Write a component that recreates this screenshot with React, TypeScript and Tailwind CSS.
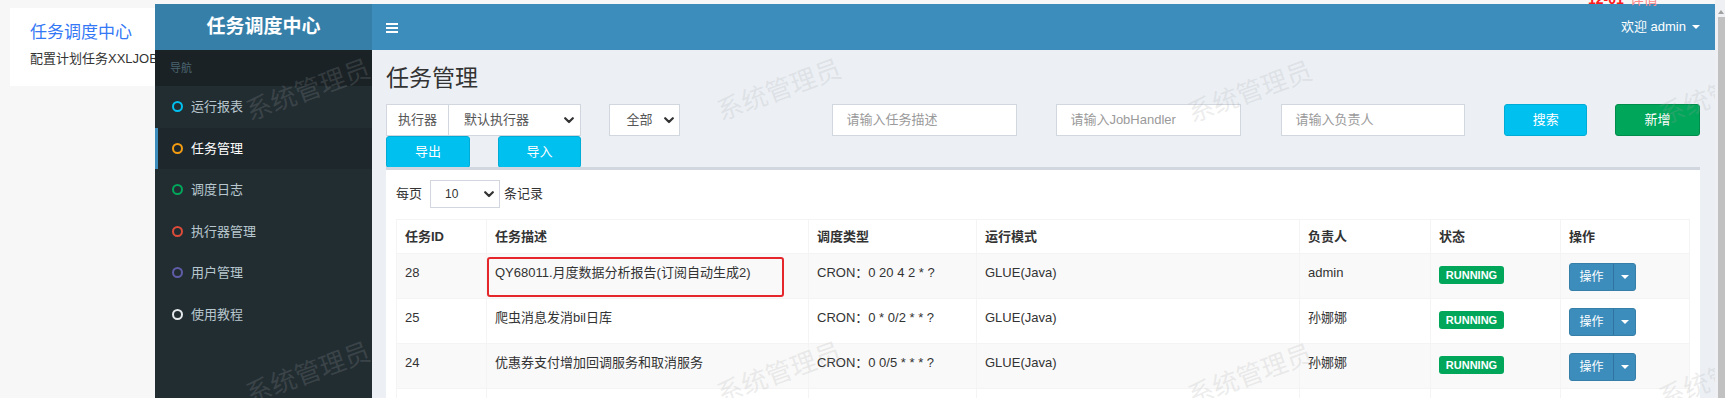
import React from "react";

const FONT = "font-['Liberation_Sans','Noto_Sans_CJK_SC',sans-serif]";

function Chevron({ className = "" }: { className?: string }) {
  return (
    <svg width="10" height="7" viewBox="0 0 10 7" className={className}>
      <polyline points="1.2,1.2 5,5 8.8,1.2" fill="none" stroke="#333" strokeWidth="2.2" strokeLinecap="round" strokeLinejoin="round" />
    </svg>
  );
}

function Caret({ color = "border-t-white" }: { color?: string }) {
  return <span className={`inline-block h-0 w-0 border-x-[4px] border-t-[4px] border-x-transparent ${color}`} />;
}

const menu = [
  { label: "运行报表", ring: "border-[#00c0ef]" },
  { label: "任务管理", ring: "border-[#f39c12]", active: true },
  { label: "调度日志", ring: "border-[#00a65a]" },
  { label: "执行器管理", ring: "border-[#dd4b39]" },
  { label: "用户管理", ring: "border-[#605ca8]" },
  { label: "使用教程", ring: "border-[#e6e9ec]" },
];

const jobs = [
  { id: "28", desc: "QY68011.月度数据分析报告(订阅自动生成2)", cron: "CRON：0 20 4 2 * ?", mode: "GLUE(Java)", owner: "admin", marked: true, bg: "bg-[#f9f9f9]" },
  { id: "25", desc: "爬虫消息发消bil日库", cron: "CRON：0 * 0/2 * * ?", mode: "GLUE(Java)", owner: "孙娜娜", bg: "bg-white" },
  { id: "24", desc: "优惠券支付增加回调服务和取消服务", cron: "CRON：0 0/5 * * * ?", mode: "GLUE(Java)", owner: "孙娜娜", bg: "bg-[#f9f9f9]" },
  { id: "", desc: "", cron: "", mode: "", owner: "", bg: "bg-white" },
];

const COLS = "grid grid-cols-[90px_322px_168px_323px_131px_130px_1fr]";

// watermark centres, relative to the admin window
const marks = [
  { x: 153, y: 86 },
  { x: 624, y: 86 },
  { x: 1095, y: 88 },
  { x: 1566, y: 90 },
  { x: 153, y: 369 },
  { x: 624, y: 369 },
  { x: 1095, y: 371 },
  { x: 1566, y: 373 },
];

function OpButton() {
  return (
    <div className="flex h-[28px] w-[67px] overflow-hidden rounded-[3px] border border-[#367fa9] bg-[#3c8dbc] text-[12px] text-white">
      <span className="flex w-[43px] items-center justify-center">操作</span>
      <span className="flex flex-1 items-center justify-center border-l border-[#2f73a0]">
        <Caret />
      </span>
    </div>
  );
}

function Badge() {
  return (
    <span className="mt-[2px] inline-flex h-[18px] w-[65px] items-center justify-center rounded-[3px] bg-[#00a65a] text-[11px] font-bold leading-none text-white">
      RUNNING
    </span>
  );
}

export default function App() {
  return (
    <div className={`relative h-[398px] w-[1725px] overflow-hidden bg-[#f7f7f7] ${FONT}`}>
      {/* underlying page */}
      <div className="flex h-full">
        <div className="flex-1">
          <div className="ml-[10px] mt-[8px] h-[78px] w-[420px] bg-white pl-[20px] pt-[14px]">
            <div className="text-[17px] leading-[22px] text-[#3478f6]">任务调度中心</div>
            <div className="mt-[6px] text-[13px] leading-[18px] text-[#333]">配置计划任务XXLJOB</div>
          </div>
        </div>
        {/* page scrollbar */}
        <div className="flex w-[10px] flex-col bg-[#eef0f3]">
          <div className="flex h-[17px] items-end justify-end pb-[3px] pr-[1px]">
            <span className="inline-block h-0 w-0 border-x-[3px] border-b-[4px] border-x-transparent border-b-[#a0a0a0]" />
          </div>
          <div className="ml-[3px] flex-1 bg-[#c1c1c1]" />
        </div>
      </div>

      {/* admin window */}
      <div className="absolute bottom-0 left-[155px] top-[4px] flex w-[1560px] overflow-hidden">
        {/* sidebar */}
        <aside className="flex w-[217px] shrink-0 flex-col bg-[#222d32]">
          <div className="flex h-[46px] items-center justify-center bg-[#367fa9] text-[19px] font-bold text-white">
            任务调度中心
          </div>
          <div className="flex h-[36px] items-center bg-[#1a2226] pl-[15px] text-[11px] text-[#4b646f]">导航</div>
          {menu.map((m) => (
            <div
              key={m.label}
              className={`flex h-[41.5px] items-center gap-2 border-l-[3px] pl-[14px] text-[13px] ${
                m.active ? "border-[#3c8dbc] bg-[#1e282c] text-white" : "border-transparent text-[#b8c7ce]"
              }`}
            >
              <span className={`h-[11px] w-[11px] rounded-full border-2 ${m.ring}`} />
              <span>{m.label}</span>
            </div>
          ))}
        </aside>

        {/* main column */}
        <div className="flex min-w-0 flex-1 flex-col bg-[#ecf0f5]">
          <header className="flex h-[46px] shrink-0 items-center justify-between bg-[#3c8dbc] pl-[14px] pr-[15px] text-white">
            <div className="flex w-[12px] flex-col gap-[2px] pt-[1px]">
              <span className="h-[2px] bg-white" />
              <span className="h-[2px] bg-white" />
              <span className="h-[2px] bg-white" />
            </div>
            <div className="flex items-center gap-[6px] text-[13px]">
              <span>欢迎 admin</span>
              <Caret />
            </div>
          </header>

          <div className="flex flex-1 flex-col pl-[14px] pr-[15px]">
            <h1 className="mt-[15px] text-[23px] leading-[26px] text-[#333]">任务管理</h1>

            {/* filters */}
            <div className="mt-[13px] flex h-[32px] text-[13px] text-[#555]">
              <div className="flex w-[195px]">
                <span className="flex w-[63px] items-center justify-center border border-[#d2d6de] bg-white">执行器</span>
                <div className="flex flex-1 items-center justify-between border border-l-0 border-[#d2d6de] bg-white pl-[15px] pr-[6px]">
                  <span>默认执行器</span>
                  <Chevron />
                </div>
              </div>
              <div className="ml-[28px] flex w-[72px] items-center justify-between border border-[#d2d6de] bg-white pl-[17px] pr-[5px]">
                <span>全部</span>
                <Chevron />
              </div>
              <input readOnly placeholder="请输入任务描述" className="ml-[152px] w-[185px] border border-[#d2d6de] bg-white pl-[13px] outline-none placeholder:text-[#9a9a9a]" />
              <input readOnly placeholder="请输入JobHandler" className="ml-[39px] w-[185px] border border-[#d2d6de] bg-white pl-[13px] outline-none placeholder:text-[#9a9a9a]" />
              <input readOnly placeholder="请输入负责人" className="ml-[40px] w-[184px] border border-[#d2d6de] bg-white pl-[13px] outline-none placeholder:text-[#9a9a9a]" />
              <button className="ml-[39px] w-[83px] rounded-[3px] border border-[#00acd6] bg-[#00c0ef] text-white">搜索</button>
              <button className="ml-[28px] w-[85px] rounded-[3px] border border-[#008d4c] bg-[#00a65a] text-white">新增</button>
            </div>
            <div className="flex h-[32px] text-[13px] text-white">
              <button className="w-[84px] rounded-[3px] border border-[#00acd6] bg-[#00c0ef]">导出</button>
              <button className="ml-[28px] w-[83px] rounded-[3px] border border-[#00acd6] bg-[#00c0ef]">导入</button>
            </div>

            {/* job list box */}
            <div className="-mt-px flex-1 border-t-[3px] border-[#d2d6de] bg-white p-[10px] text-[13px] text-[#333]">
              <div className="flex h-[28px] items-center">
                <span>每页</span>
                <div className="ml-[8px] flex h-[28px] w-[70px] items-center justify-between border border-[#d2d6de] pl-[14px] pr-[5px] text-[12px]">
                  <span>10</span>
                  <Chevron />
                </div>
                <span className="ml-[4px]">条记录</span>
              </div>

              <div className="mt-[11px] border border-[#f4f4f4]">
                <div className={`${COLS} h-[34px] items-stretch border-b border-[#f4f4f4] font-bold`}>
                  {["任务ID", "任务描述", "调度类型", "运行模式", "负责人", "状态", "操作"].map((h, i) => (
                    <div key={h} className={`flex items-center px-2 ${i < 6 ? "border-r border-[#f4f4f4]" : ""}`}>
                      {h}
                    </div>
                  ))}
                </div>
                {jobs.map((j, idx) => (
                  <div key={idx} className={`${COLS} h-[45px] border-b border-[#f4f4f4] leading-5 ${j.bg}`}>
                    <div className="border-r border-[#f4f4f4] px-2 pt-[9px]">{j.id}</div>
                    <div className="relative border-r border-[#f4f4f4] px-2 pt-[9px]">
                      {j.desc}
                      {j.marked && (
                        <span className="pointer-events-none absolute left-0 top-[3px] h-[40px] w-[297px] rounded-[3px] border-2 border-[#e5262a]" />
                      )}
                    </div>
                    <div className="border-r border-[#f4f4f4] px-2 pt-[9px]">{j.cron}</div>
                    <div className="border-r border-[#f4f4f4] px-2 pt-[9px]">{j.mode}</div>
                    <div className="border-r border-[#f4f4f4] px-2 pt-[9px]">{j.owner}</div>
                    <div className="border-r border-[#f4f4f4] px-2 pt-[10px]">
                      <Badge />
                    </div>
                    <div className="px-2 pt-[9px]">
                      <OpButton />
                    </div>
                  </div>
                ))}
              </div>
            </div>
          </div>
        </div>

        {/* watermark layer */}
        <div className="pointer-events-none absolute inset-0">
          {marks.map((m, i) => (
            <span
              key={i}
              className="absolute w-[140px] -rotate-[20deg] text-center text-[26px] leading-[30px] whitespace-nowrap text-[rgba(164,164,164,0.2)]"
              style={{ left: m.x - 70, top: m.y - 15 }}
            >
              系统管理员
            </span>
          ))}
        </div>
      </div>

      {/* date note peeking in at the top edge */}
      <div className="absolute left-[1588px] top-[-9px] flex gap-[6px] text-[14px] leading-[16px]">
        <span className="font-bold text-[#ff1a1a]">12-01</span>
        <span className="text-[#ff8a8a]">详情</span>
      </div>
    </div>
  );
}
